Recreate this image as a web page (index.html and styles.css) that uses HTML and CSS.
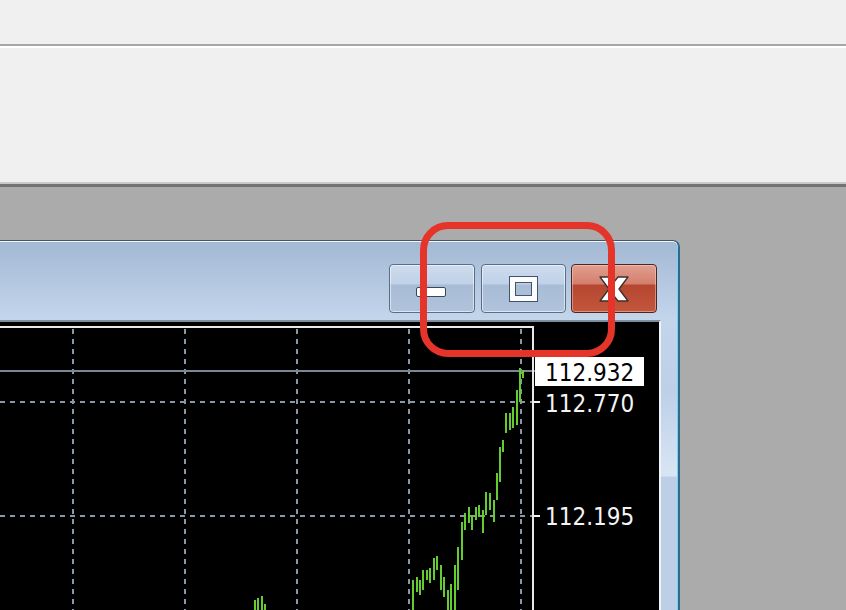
FILE: index.html
```html
<!DOCTYPE html>
<html lang="en">
<head>
  <meta charset="UTF-8" />
  <title>Chart window</title>
  <link rel="stylesheet" href="styles.css">
</head>
<body>
  <div class="toolbar"></div>
  <div class="ribbon"></div>

  <div class="workspace">
    <div class="window">
      <div class="titlebar">
        <button class="cap-btn"><span class="ico-min"></span></button>
        <button class="cap-btn"><span class="ico-max"></span></button>
        <button class="cap-btn close">
          <svg class="ico-close" width="30" height="26" viewBox="0 0 30 26">
            <path d="M1 1H11L15 6L19 1H29L20 13L29 25H19L15 20L11 25H1L10 13Z" />
          </svg>
        </button>
      </div>

      <div class="chart">
        <svg width="659" height="290" viewBox="0 322 659 290">
          <!-- grid -->
          <g class="grid">
            <line x1="73" y1="329" x2="73" y2="612" />
            <line x1="185" y1="329" x2="185" y2="612" />
            <line x1="297" y1="329" x2="297" y2="612" />
            <line x1="409" y1="329" x2="409" y2="612" />
            <line x1="521" y1="329" x2="521" y2="612" />
            <line x1="0" y1="402" x2="532" y2="402" />
            <line x1="0" y1="516" x2="532" y2="516" />
          </g>
          <line class="price-line" x1="0" y1="371" x2="535" y2="371" />

          <!-- bars -->
          <path class="bars" d="M255 600V612 M258 598V612 M262 596V612 M265 604V612
            M413 580V612 M417 577V592 M420 580V595 M423 570V590 M427 570V580 M430 568V583
            M434 558V580 M437 556V570 M441 565V590 M444 577V597 M448 590V612 M451 584V612
            M455 565V612 M458 547V590 M462 522V560 M465 513V530 M469 507V523 M472 515V530
            M476 507V520 M479 505V517 M483 510V533 M486 492V515 M490 493V510 M494 500V522
            M497 473V500 M500 447V482 M503 440V452 M506 413V433 M510 413V430 M513 407V428
            M517 390V425 M520 368V402 M523 370V378" />

          <!-- plot frame and scale -->
          <path class="frame" d="M0 327H533V612" />
          <line class="tick" x1="534" y1="402" x2="540" y2="402" />
          <line class="tick" x1="534" y1="516" x2="540" y2="516" />

          <rect class="bid-box" x="535" y="357" width="109" height="29" />
          <text class="price bid" x="545" y="381">112.932</text>
          <text class="price" x="545" y="412">112.770</text>
          <text class="price" x="545" y="525">112.195</text>
        </svg>
      </div>
    </div>
  </div>

  <div class="highlight"></div>
</body>
</html>
```

FILE: styles.css
```css
body {
  margin: 0;
  width: 846px;
  height: 610px;
  overflow: hidden;
  background: #ababab;
  font-family: "DejaVu Sans", sans-serif;
  position: relative;
}
.toolbar {
  height: 44px;
  background: #f0f0f0;
  border-bottom: 2px solid #a6a6a6;
}
.ribbon {
  height: 134px;
  background: #f0f0f0;
  border-top: 2px solid #fff;
  border-bottom: 2px solid #c9c9c9;
}
.workspace {
  height: 423px;
  background: #ababab;
  border-top: 3px solid #727272;
  overflow: hidden;
}
.window {
  box-sizing: border-box;
  width: 690px;
  height: 380px;
  margin: 53px 0 0 -10px;
  padding: 0 17px 0 9px;
  border: 1px solid #44566b;
  border-right: 2px solid #2d6a8c;
  border-bottom: none;
  border-radius: 7px 7px 0 0;
  box-shadow: inset 0 1px 0 #f2f6fb, inset -1px 0 0 #7fd0ee;
  background: linear-gradient(#a3b8d3 0, #b3c7e0 40px, #c2d5eb 78px, #bdd0e8 150px, #d9e5f3 235px, #bccfe7 236px, #bccfe7 100%);
}
.titlebar {
  height: 79px;
  box-sizing: border-box;
  padding: 23px 4px 0 0;
  display: flex;
  justify-content: flex-end;
  align-items: flex-start;
}
.cap-btn {
  box-sizing: border-box;
  width: 86px;
  height: 49px;
  margin-left: 6px;
  padding: 0;
  border: 1px solid #5a6d87;
  border-radius: 4px;
  box-shadow: inset 0 0 0 1px rgba(255,255,255,0.55);
  background: linear-gradient(#cddbee 0, #c0d1e7 19px, #a8bcd5 20px, #b0c3dc 100%);
  display: flex;
  justify-content: center;
  align-items: center;
}
.cap-btn:nth-child(2) {
  width: 85px;
}
.cap-btn.close {
  margin-left: 5px;
  border-color: #4e2420;
  box-shadow: inset 0 0 0 1px rgba(255,220,210,0.45);
  background: linear-gradient(#e1a090 0, #d47e6c 19px, #b54630 20px, #c2573c 100%);
}
.ico-min {
  box-sizing: border-box;
  width: 30px;
  height: 10px;
  margin: 6px 2px 0 0;
  background: #fff;
  border: 1px solid #3a4759;
  border-radius: 2px;
}
.ico-max {
  box-sizing: border-box;
  width: 27px;
  height: 24px;
  border: 5px solid #fbfcfe;
  outline: 1px solid #45526a;
  box-shadow: inset 0 0 0 1px #45526a;
}
.ico-close path {
  fill: #fff;
  stroke: #3a3030;
  stroke-width: 1.3;
  stroke-linejoin: round;
}
.chart {
  box-sizing: border-box;
  height: 300px;
  background: #000;
  border-top: 2px solid #7f8e9f;
  border-right: 2px solid #eef3f9;
}
.chart svg {
  display: block;
}
.grid line {
  stroke: #8a97a6;
  stroke-width: 2;
  stroke-dasharray: 5 5;
}
.price-line {
  stroke: #7a8796;
  stroke-width: 2;
}
.bars {
  stroke: #64cd2e;
  stroke-width: 2;
  fill: none;
}
.frame {
  stroke: #e9e9e9;
  stroke-width: 2;
  fill: none;
}
.tick {
  stroke: #f2f2f2;
  stroke-width: 2;
}
.bid-box {
  fill: #fff;
}
.price {
  font-family: "DejaVu Sans Condensed", "DejaVu Sans", sans-serif;
  font-stretch: condensed;
  font-size: 24px;
  fill: #f4f4f4;
}
.price.bid {
  fill: #000;
}
.highlight {
  position: absolute;
  left: 420px;
  top: 222px;
  width: 195px;
  height: 135px;
  box-sizing: border-box;
  border: 7px solid #e5352a;
  border-radius: 28px;
}
```
